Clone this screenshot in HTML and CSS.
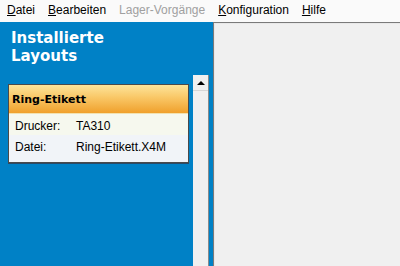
FILE: index.html
```html
<!DOCTYPE html>
<html lang="de">
<head>
    <meta charset="UTF-8">
    <title>Layouts</title>
    <link rel="stylesheet" href="styles.css">
</head>
<body>
    <!-- Menü -->
    <nav class="menubar">
        <span class="menu-item"><u>D</u>atei</span>
        <span class="menu-item"><u>B</u>earbeiten</span>
        <span class="menu-item disabled">Lager-Vorgänge</span>
        <span class="menu-item"><u>K</u>onfiguration</span>
        <span class="menu-item"><u>H</u>ilfe</span>
    </nav>

    <div class="main">
        <!-- Linke Seite: Layouts -->
        <aside class="side">
            <div class="side-title">Installierte<br>Layouts</div>
            <div class="side-body">
                <div class="layout-list">
                    <div class="card">
                        <div class="card-head">Ring-Etikett</div>
                        <div class="card-row">
                            <span class="label">Drucker:</span>
                            <span class="value">TA310</span>
                        </div>
                        <div class="card-row alt">
                            <span class="label">Datei:</span>
                            <span class="value">Ring-Etikett.X4M</span>
                        </div>
                    </div>
                </div>
                <div class="scrollbar">
                    <div class="scroll-btn"><span class="arrow-up"></span></div>
                </div>
            </div>
        </aside>

        <!-- Rechte Seite -->
        <section class="content"></section>
    </div>
</body>
</html>
```

FILE: styles.css
```css
body {
    margin: 0;
    padding: 0;
    width: 400px;
    height: 266px;
    overflow: hidden;
    background: #f0f0f0;
    font-family: "Liberation Sans", Arial, sans-serif;
}

.menubar {
    display: flex;
    height: 22px;
    align-items: center;
    padding-left: 1px;
    background: #fafafa;
    font-size: 12px;
    color: #000;
}

.menu-item {
    padding: 0 7px 2px 6px;
}

.menu-item.disabled {
    color: #a0a0a0;
}

.main {
    display: flex;
    height: 244px;
}

.side {
    width: 213px;
    display: flex;
    flex-direction: column;
    background: #0081c6;
}

.side-title {
    height: 53px;
    box-sizing: border-box;
    padding: 7px 0 0 11px;
    color: white;
    font-family: "DejaVu Sans", Verdana, sans-serif;
    font-weight: bold;
    font-size: 15px;
    line-height: 18px;
}

.side-body {
    flex: 1;
    display: flex;
}

.layout-list {
    width: 185px;
    padding: 9px 0 0 8px;
}

.card {
    width: 179px;
    border: 1px solid #4a4a4a;
    box-shadow: 0 1px 0 #2a4a66;
}

.card-head {
    height: 28px;
    line-height: 30px;
    padding-left: 3px;
    background: linear-gradient(#fde49a, #f9c766 45%, #f0a02c);
    font-family: "DejaVu Sans", Verdana, sans-serif;
    font-weight: bold;
    font-size: 11px;
    color: #000;
    border-bottom: 1px solid #f2e2b0;
}

.card-row {
    display: flex;
    height: 19px;
    padding: 2px 0 0 6px;
    line-height: 21px;
    font-size: 12px;
    background: #f6f8ee;
}

.card-row.alt {
    height: 25px;
    background: #f1f4f8;
}

.label {
    width: 61px;
}

.scrollbar {
    width: 15px;
    background: #f0f0f0;
    border-right: 1px solid #8a8a8a;
}

.scroll-btn {
    height: 15px;
    display: flex;
    align-items: center;
    justify-content: center;
    border-bottom: 1px solid #d6d6d6;
}

.arrow-up {
    width: 0;
    height: 0;
    border-left: 4px solid transparent;
    border-right: 4px solid transparent;
    border-bottom: 4px solid #000;
}

.content {
    flex: 1;
    margin-left: -4px;
    border-left: 4px solid #0081c6;
    box-shadow: inset 1px 1px 0 #7a7a7a, inset 2px 2px 0 #e8e8e8;
    background: #f0f0f0;
}
```
